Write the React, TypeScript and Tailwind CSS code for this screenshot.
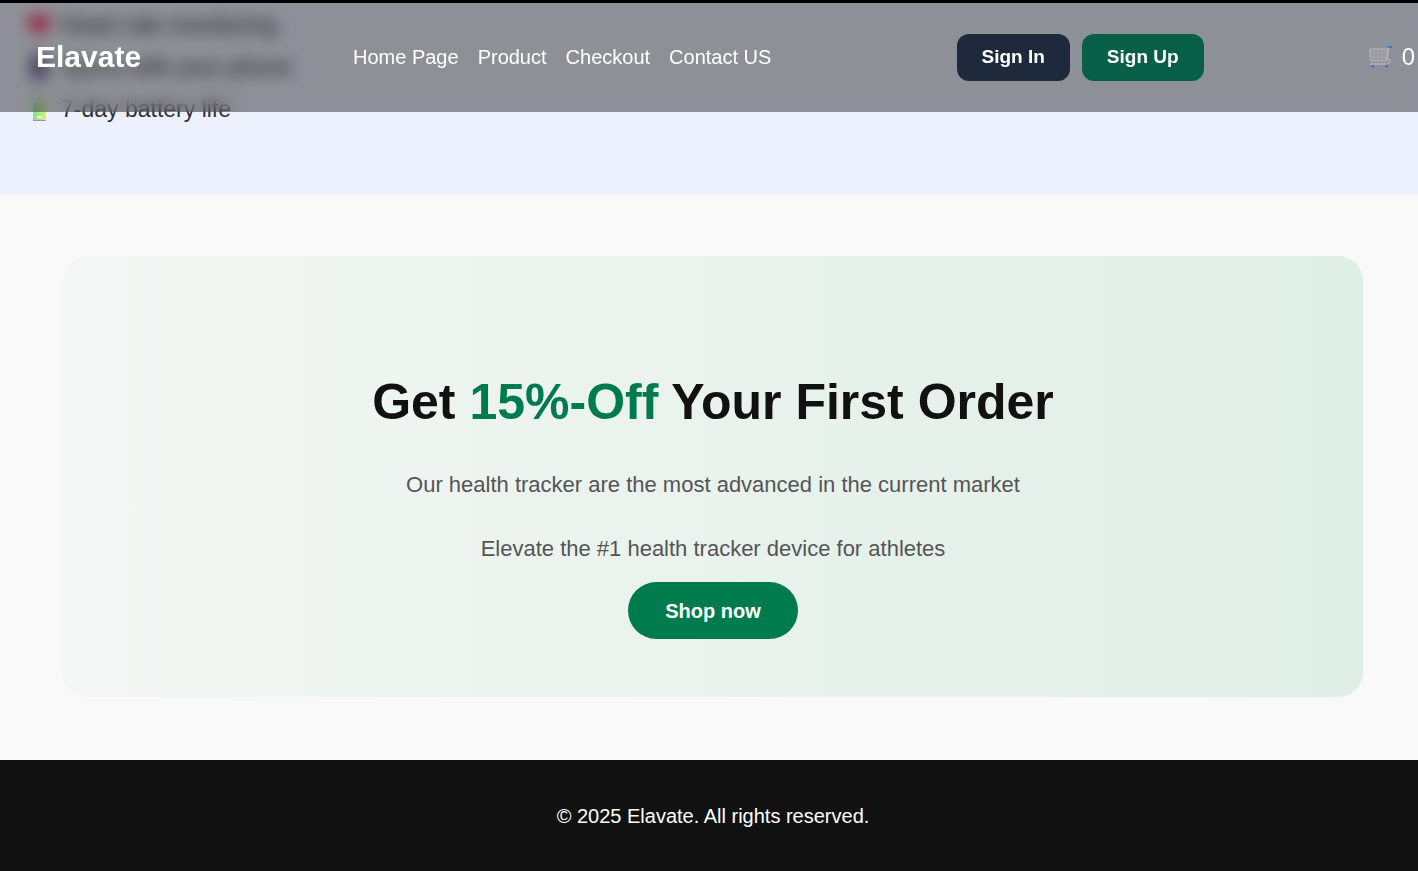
import React from "react";

const navLinks = ["Home Page", "Product", "Checkout", "Contact US"];

function HeartIcon() {
  return (
    <svg viewBox="0 0 28 28" className="size-7 shrink-0" aria-hidden="true">
      <path d="M14 24C8 20 3 15 3 10C3 3 11 2 14 7C17 2 25 3 25 10C25 15 20 20 14 24Z" fill="#f5305a" />
    </svg>
  );
}

function PhoneIcon() {
  return (
    <svg viewBox="0 0 28 28" className="size-7 shrink-0" aria-hidden="true">
      <rect x="7" y="2" width="14" height="24" rx="2" fill="#3d2c58" />
      <rect x="9" y="5" width="10" height="18" fill="#6b5a8c" />
    </svg>
  );
}

function BatteryIcon() {
  return (
    <svg viewBox="0 0 28 28" className="size-7 shrink-0" aria-hidden="true">
      <defs>
        <linearGradient id="charge" x1="0" x2="1">
          <stop offset="0" stopColor="#88df91" />
          <stop offset="1" stopColor="#d4f474" />
        </linearGradient>
      </defs>
      <rect x="11" y="2" width="7" height="4" fill="#a6a0a9" />
      <rect x="8" y="5" width="13" height="21" fill="url(#charge)" />
      <path d="M8 25H21V26H8Z" fill="#a78bb8" />
      <path d="M13 21H16V22H17V23H12V22H13Z" fill="#fff" />
    </svg>
  );
}

function CartIcon() {
  return (
    <svg viewBox="0 0 24 24" className="size-6 shrink-0" fill="none" aria-hidden="true">
      <path d="M1 4H19L17 16H3Q1 16 1 14Z" fill="#999aa1" stroke="#bab5bd" strokeWidth="1" />
      <path d="M1 8H18M1 12H17M5 4V16M9 4V16M13 4V16" stroke="#aaa7b0" strokeWidth="0.8" />
      <path d="M22 2H20L18 14Q22 14 21 17Q20 19 17 19H1" stroke="#b9afbd" strokeWidth="1.3" />
      <path d="M19 1H23V3H19Z" fill="#3479c9" />
      <path d="M2.500 20H5V22.500H2.500ZM16.500 20H19V22.500H16.500Z" fill="#3479c9" />
    </svg>
  );
}

const features = [
  { icon: <HeartIcon />, text: "Heart rate monitoring" },
  { icon: <PhoneIcon />, text: "Syncs with your phone" },
  { icon: <BatteryIcon />, text: "7-day battery life" },
];

export default function App() {
  return (
    <div className="min-h-screen overflow-x-hidden bg-[#f9f9f9] font-['Liberation_Sans',Arial,sans-serif] text-[#111]">
      <header className="fixed inset-x-0 top-0 z-10 flex h-28 items-center border-t-3 border-black bg-black/40 pb-px pl-9 pr-[3px] text-white backdrop-blur-[8px]">
        <a href="#home" className="w-[317px] shrink-0 text-3xl font-bold">Elavate</a>
        <nav className="flex shrink-0 gap-[19px] text-xl">
          {navLinks.map((link) => (
            <a key={link} href="#home">{link}</a>
          ))}
        </nav>
        <div className="ml-auto flex shrink-0 gap-3 text-[19px] font-bold">
          <button type="button" className="h-[47px] rounded-xl bg-[#1e293b] px-[25px]">Sign In</button>
          <button type="button" className="h-[47px] rounded-xl bg-[#065f46] px-[25px]">Sign Up</button>
        </div>
        <button type="button" aria-label="Cart, 0 items" className="ml-[165px] flex shrink-0 items-center gap-[9px] text-2xl">
          <CartIcon />
          <span>0</span>
        </button>
      </header>
      <main>
        <section className="bg-[#edf1fe] pb-16 pl-[25px] pt-1">
          <ul className="text-[23px] text-[#333]">
            {features.map(({ icon, text }) => (
              <li key={text} className="flex h-[42px] items-center gap-2">
                {icon}
                <span>{text}</span>
              </li>
            ))}
          </ul>
        </section>
        <section className="pb-[63px] pl-[63px] pr-[55px] pt-[62px]">
          <div className="mx-auto flex flex-col items-center rounded-[25px] bg-linear-to-r from-[#f4f7f5] to-[#dfeee6] px-8 pb-[58px] pt-[114px] text-center">
            <h1 className="text-[50px] font-bold leading-[64px]">
              Get <span className="text-[#007b4e]">15%-Off</span> Your First Order
            </h1>
            <p className="mt-[35px] text-[22px] leading-8 text-[#555]">Our health tracker are the most advanced in the current market</p>
            <p className="mt-8 text-[22px] leading-8 text-[#555]">Elevate the #1 health tracker device for athletes</p>
            <button type="button" className="mt-[17px] h-[57px] rounded-full bg-[#007b4e] px-[37px] text-xl font-bold text-white">Shop now</button>
          </div>
        </section>
      </main>
      <footer className="bg-[#111] py-10 pl-2 text-center text-xl leading-8 text-white">
        <p>© 2025 Elavate. All rights reserved.</p>
      </footer>
    </div>
  );
}
